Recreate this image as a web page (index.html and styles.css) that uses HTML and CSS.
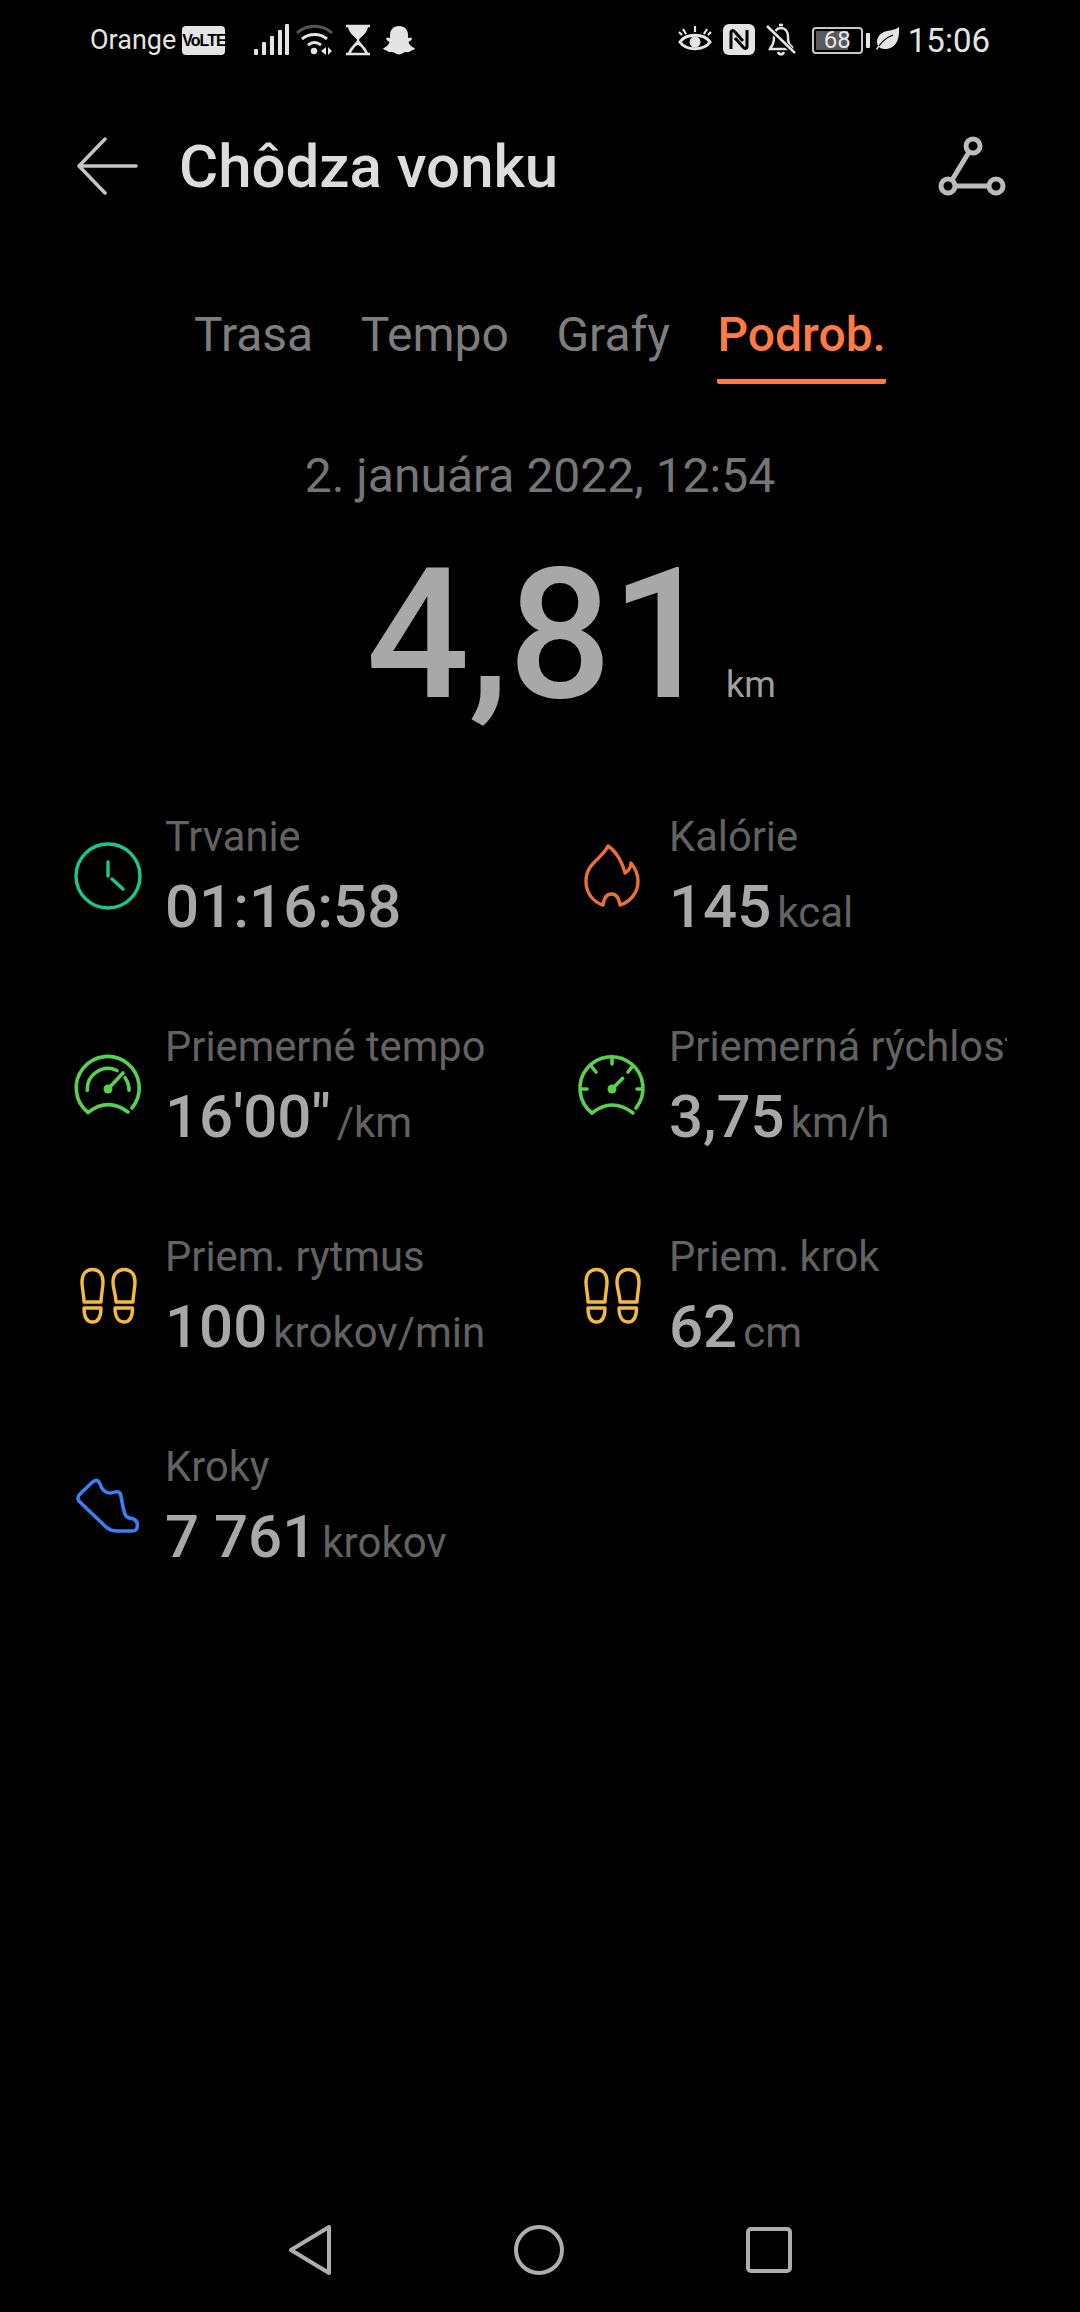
FILE: index.html
```html
<!DOCTYPE html>
<html lang="sk">
<head>
<meta charset="utf-8">
<title>Chôdza vonku</title>
<link rel="stylesheet" href="styles.css">
</head>
<body>
<div class="screen">
  <div class="status">
    <div class="status-left">
      <span class="carrier">Orange</span>
      <span class="volte">VoLTE</span>
      <svg class="si sig" width="36" height="32" viewBox="0 0 36 32"><g fill="#e4e4e4"><rect x="1" y="25" width="4" height="6" rx="1"/><rect x="9" y="18" width="4" height="13" rx="1"/><rect x="17" y="12" width="4" height="19" rx="1"/><rect x="25" y="6" width="4" height="25" rx="1"/><rect x="32" y="0" width="4" height="31" rx="1"/></g></svg>
      <svg class="si wifi" width="40" height="32" viewBox="0 0 40 32"><path d="M2 9C12 0 27 0 37 9" fill="none" stroke="#555" stroke-width="3"/><path d="M7 15C14 9 25 9 32 15M13 21C17 18 22 18 26 21" fill="none" stroke="#e4e4e4" stroke-width="3"/><circle cx="19" cy="27" r="3.2" fill="#e4e4e4"/><path d="M31 23v8l-5-4zM33 23v8l4-4z" fill="#e4e4e4"/></svg>
      <svg class="si hour" width="26" height="32" viewBox="0 0 26 32"><path d="M1 2h24M1 30h24" stroke="#e4e4e4" stroke-width="2.5"/><path d="M3 3h20C22 10 15 13 14 16C15 19 21 23 23 29H20C18 25 15 21 13 21C11 21 8 25 6 29H3C5 23 11 19 12 16C11 13 4 10 3 3Z" fill="#e4e4e4"/></svg>
      <svg class="si ghost" width="32" height="30" viewBox="0 0 32 30"><path d="M16 1C22 1 25 5 25 10V13L28 12.500L29 14C28 16 26 16 25.500 17C26 20 29 22 32 23.500C31 25 29 25 27.500 26C26 28 24 26.500 21 27.500C19 28.500 18 29.500 16 29.500C14 29.500 13 28.500 11 27.500C8 26.500 6 28 4.500 26C3 25 1 25 0 23.500C3 22 6 20 6.500 17C6 16 4 16 3 14L4 12.500L7 13V10C7 5 10 1 16 1Z" fill="#e4e4e4"/></svg>
    </div>
    <div class="status-right">
      <svg class="si" width="34" height="32" viewBox="0 0 34 32"><path d="M2 18C8 9 26 9 32 18C26 27 8 27 2 18Z" fill="none" stroke="#e4e4e4" stroke-width="3"/><circle cx="17" cy="18" r="5.500" fill="#e4e4e4"/><path d="M17 2v6M5 5l3 5M29 5l-3 5M1 8l3 3M33 8l-3 3" stroke="#e4e4e4" stroke-width="2.200"/></svg>
      <svg class="si" width="32" height="32" viewBox="0 0 32 32"><rect x="0" y="0" width="32" height="31" rx="6" fill="#e4e4e4"/><path d="M8 25V9C8 6 10 6 12 8L20 17M24 6V22C24 25 22 25 20 23L12 14" fill="none" stroke="#000" stroke-width="3"/></svg>
      <svg class="si" width="30" height="34" viewBox="0 0 30 34"><path d="M5 24C8 21 8 18 8 14C8 8 11 5 15 5C19 5 22 8 22 14C22 18 22 21 26 24V26H4Z" fill="none" stroke="#e4e4e4" stroke-width="2.500"/><path d="M1 3L29 31" stroke="#000" stroke-width="5"/><path d="M1 3L29 30" stroke="#e4e4e4" stroke-width="2.500"/><path d="M13 2h4M12 29c1 3 5 3 6 0" fill="none" stroke="#e4e4e4" stroke-width="2.500"/></svg>
      <div class="battery"><div class="battery-body"><span class="battery-fill"></span><span class="battery-num">68</span></div><span class="battery-nub"></span></div>
      <svg class="si leaf" width="24" height="26" viewBox="0 0 24 26"><path d="M23 0C24 12 20 22 9 22C6 22 4 21 3 20L1 23L0 22L2 19C0 15 1 9 6 6C11 3 18 4 23 0Z" fill="#e4e4e4"/><path d="M3 19C7 13 12 10 17 8" stroke="#000" stroke-width="1.200" fill="none"/></svg>
      <span class="time">15:06</span>
    </div>
  </div>

  <header class="appbar">
    <svg class="back" width="62" height="58" viewBox="0 0 62 58"><path d="M3 29H60M29 2L3 29L29 56" fill="none" stroke="#c4c4c4" stroke-width="3.500" stroke-linecap="round" stroke-linejoin="round"/></svg>
    <h1 class="title">Chôdza vonku</h1>
    <svg class="route" width="70" height="62" viewBox="0 0 70 62"><g fill="none" stroke="#bcbcbc" stroke-width="5"><circle cx="36" cy="11" r="7"/><circle cx="11" cy="51" r="7"/><circle cx="59" cy="51" r="7"/><path d="M32 17L15 45M18 51H52"/></g></svg>
  </header>

  <nav class="tabs">
    <span class="tab">Trasa</span>
    <span class="tab">Tempo</span>
    <span class="tab">Grafy</span>
    <span class="tab active">Podrob.</span>
  </nav>

  <div class="date">2. januára 2022, 12:54</div>
  <div class="distance"><span class="dist-num">4,81</span><span class="dist-unit">km</span></div>

  <section class="stats">
    <div class="stat">
      <svg class="ic" viewBox="8 15 80 80"><g fill="none" stroke="#18c98f" stroke-width="3.400" stroke-linecap="round"><circle cx="48" cy="55" r="32"/><path d="M48 41V55M52 58L63 68"/></g></svg>
      <div class="txt"><div class="lbl">Trvanie</div><div class="val">01:16:58</div></div>
    </div>
    <div class="stat">
      <svg class="ic" viewBox="12 15 80 80"><path d="M48 25C42 38 26 42 26 60C26 72 33 81 43 84C44 77 47 73 51.500 73C56 73 59 77 60 84C70 81 78 72 78 60C78 52 75 47 71 42C71 47 68 50 65 52C63 43 57 31 48 25Z" fill="none" stroke="#e8703a" stroke-width="3.400" stroke-linejoin="round"/></svg>
      <div class="txt"><div class="lbl">Kalórie</div><div class="val">145<span class="unit">kcal</span></div></div>
    </div>
    <div class="stat">
      <svg class="ic" viewBox="8 15 80 80"><g fill="none" stroke="#5ad04f" stroke-width="3.600" stroke-linecap="round"><path d="M72 77A31.500 31.500 0 1 0 28 81.500Q48 66 68 81"/><path d="M27.300 59.300A20.700 20.700 0 0 1 57 39.500M65 46.700A20.700 20.700 0 0 1 69 59.300"/><path d="M48 58L63 42"/></g><circle cx="48" cy="58" r="4.500" fill="#5ad04f"/></svg>
      <div class="txt"><div class="lbl">Priemerné tempo</div><div class="val">16'00"<span class="unit">/km</span></div></div>
    </div>
    <div class="stat">
      <svg class="ic" viewBox="12 15 80 80"><g fill="none" stroke="#5ad04f" stroke-width="3.600" stroke-linecap="round"><path d="M76 77A31.500 31.500 0 1 0 32 82Q52 66 73 82"/><path d="M52 28V33M32 36L36 41M72 36L68 41M22 58H27M82 58H77"/><path d="M52 58L62.700 47.300"/></g><circle cx="52" cy="58" r="4.500" fill="#5ad04f"/></svg>
      <div class="txt"><div class="lbl">Priemerná rýchlosť</div><div class="val">3,75<span class="unit">km/h</span></div></div>
    </div>
    <div class="stat">
      <svg class="ic" viewBox="8 15 80 80"><g fill="none" stroke="#f5b942" stroke-width="3.400" stroke-linejoin="round"><path d="M32.500 28.500C26 28.500 22 33 22 41C22 48 24 54 24 61H41C41 54 43 48 43 41C43 33 39 28.500 32.500 28.500Z"/><path d="M24 67H41C41 76 38 81 32.500 81C27 81 24 76 24 67Z"/><path d="M64 28.500C58 28.500 53 33 53 41C53 48 56 54 56 61H73C73 54 75 48 75 41C75 33 70.500 28.500 64 28.500Z"/><path d="M55 67H72.500C72.500 76 69.500 81 64 81C58.500 81 55 76 55 67Z"/></g></svg>
      <div class="txt"><div class="lbl">Priem. rytmus</div><div class="val">100<span class="unit">krokov/min</span></div></div>
    </div>
    <div class="stat">
      <svg class="ic" viewBox="8 15 80 80"><g fill="none" stroke="#f5b942" stroke-width="3.400" stroke-linejoin="round"><path d="M32.500 28.500C26 28.500 22 33 22 41C22 48 24 54 24 61H41C41 54 43 48 43 41C43 33 39 28.500 32.500 28.500Z"/><path d="M24 67H41C41 76 38 81 32.500 81C27 81 24 76 24 67Z"/><path d="M64 28.500C58 28.500 53 33 53 41C53 48 56 54 56 61H73C73 54 75 48 75 41C75 33 70.500 28.500 64 28.500Z"/><path d="M55 67H72.500C72.500 76 69.500 81 64 81C58.500 81 55 76 55 67Z"/></g></svg>
      <div class="txt"><div class="lbl">Priem. krok</div><div class="val">62<span class="unit">cm</span></div></div>
    </div>
    <div class="stat">
      <svg class="ic" viewBox="8 15 80 80"><path d="M20 43L32 31.500C36 28 38.500 29 40 33C42 39 46 42 50 42C53 42 58 39 60 42C62 47 62 55 65 63C66 67 69 67 72 67.500C77 69 78 73 77 77C76 80 74 80 71 80H58C52 80 50 79 46 76L21 52C17 49 17 46 20 43Z" fill="none" stroke="#3b7ff0" stroke-width="3.600" stroke-linejoin="round"/></svg>
      <div class="txt"><div class="lbl">Kroky</div><div class="val">7 761<span class="unit">krokov</span></div></div>
    </div>
  </section>

  <footer class="navbar">
    <svg width="44" height="50" viewBox="0 0 44 50"><path d="M3 25L41 2V48Z" fill="none" stroke="#aeaeae" stroke-width="4" stroke-linejoin="round"/></svg>
    <svg width="50" height="50" viewBox="0 0 50 50"><circle cx="25" cy="25" r="23" fill="none" stroke="#aeaeae" stroke-width="4"/></svg>
    <svg width="46" height="46" viewBox="0 0 46 46"><rect x="2" y="2" width="42" height="42" rx="3" fill="none" stroke="#aeaeae" stroke-width="4"/></svg>
  </footer>
</div>
</body>
</html>
```

FILE: styles.css
```css
* { box-sizing: border-box; }
html, body { margin: 0; padding: 0; background: #000; }
body { font-family: Roboto, "Noto Sans", sans-serif; }
.screen { width: 1080px; height: 2312px; display: flex; flex-direction: column; background: #000; overflow: hidden; }

.status { height: 80px; padding: 0 90px; display: flex; justify-content: space-between; align-items: center; color: #e4e4e4; }
.status-left, .status-right { display: flex; align-items: center; }
.carrier { font-size: 27px; margin-right: 6px; }
.volte { width: 43px; height: 29px; background: #e4e4e4; border-radius: 4px; color: #000; font-family: "Liberation Sans", sans-serif; font-size: 16px; font-weight: 700; line-height: 29px; text-align: center; margin-right: 28px; letter-spacing: -1px; }
.sig { margin-right: 6px; }
.wifi { margin-right: 10px; }
.hour { margin-right: 12px; }
.status-right .si { margin-right: 11px; }
.battery { display: flex; align-items: center; margin-right: 6px; margin-left: 5px; }
.battery-body { position: relative; width: 51px; height: 27px; border: 2px solid #c8c8c8; border-radius: 4px; overflow: hidden; display: flex; align-items: center; justify-content: center; }
.battery-fill { position: absolute; left: 2px; top: 2px; bottom: 2px; width: 68%; background: #5a5a5a; }
.battery-num { position: relative; font-size: 24px; color: #e8e8e8; line-height: 1; }
.battery-nub { width: 4px; height: 15px; margin-left: 3px; background: #e4e4e4; border-radius: 1px; }
.status-right .leaf { margin-right: 8px; }
.time { font-size: 33px; color: #e4e4e4; }

.appbar { height: 94px; margin-top: 39px; padding: 0 73px 0 76px; display: flex; align-items: center; }
.back { flex: none; margin-right: 41px; }
.title { margin: 0; flex: 1; font-size: 60px; font-weight: 500; color: #dcdcdc; }
.route { flex: none; }

.tabs { margin-top: 94px; height: 81px; padding-left: 194px; display: flex; gap: 47.5px; }
.tab { font-size: 48px; color: #7d7d7d; line-height: 56px; height: 77px; }
.tab.active { color: #ff7a45; font-weight: 500; border-bottom: 5px solid #ff7a45; border-radius: 2px; }

.date { margin-top: 60px; text-align: center; font-size: 48px; line-height: 56px; color: #757575; }
.distance { display: flex; justify-content: center; align-items: baseline; height: 170px; margin-top: 46px; padding-left: 62px; }
.dist-num { font-size: 182px; font-weight: 500; line-height: 170px; color: #a8a8a8; letter-spacing: -1px; }
.dist-unit { font-size: 36px; color: #a0a0a0; margin-left: 13px; }

.stats { margin-top: 92px; padding-left: 68px; display: grid; grid-template-columns: 504px 435px; grid-auto-rows: 210px; }
.stat { display: flex; min-width: 0; overflow: hidden; }
.ic { flex: none; width: 80px; height: 80px; margin-top: 24px; margin-right: 17px; }
.txt { min-width: 0; flex: 1; overflow: hidden; white-space: nowrap; }
.lbl { font-size: 41.7px; line-height: 50px; color: #626262; }
.val { font-size: 60px; font-weight: 500; line-height: 90px; color: #a8a8a8; }
.unit { font-size: 42px; font-weight: 400; color: #626262; margin-left: 6px; }

.navbar { margin-top: auto; height: 116px; padding: 0 288px 8px; display: flex; justify-content: space-between; align-items: center; }
```
